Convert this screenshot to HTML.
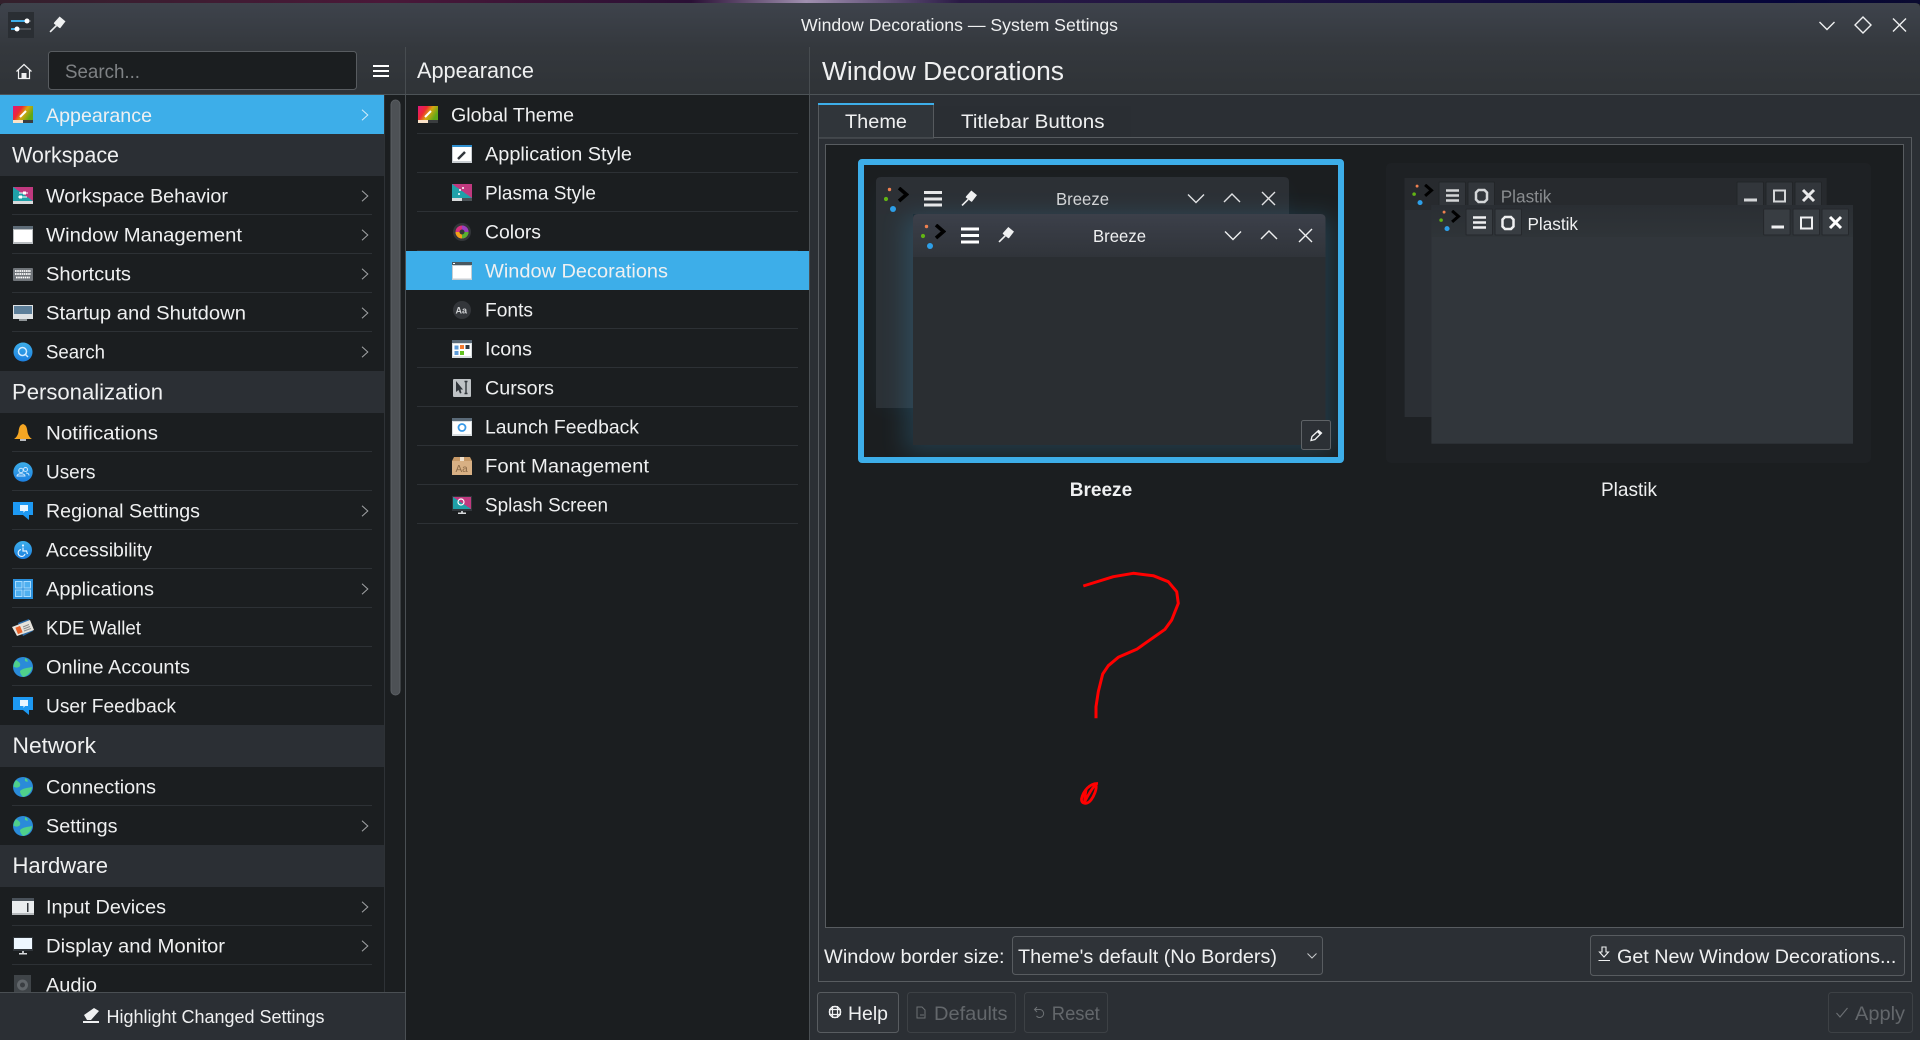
<!DOCTYPE html>
<html lang="en"><head><meta charset="utf-8"><title>Window Decorations — System Settings</title>
<style>
html,body{margin:0;padding:0;background:#1b1e20;width:1920px;height:1040px;overflow:hidden}
svg{display:block}
text{font-family:"Liberation Sans",sans-serif;fill:#eff0f1}
.t{font-size:19.5px}
.h{font-size:22px}
.d{fill:#63676b;font-size:19.5px}
.s{fill:#2d3135}
</style></head><body>
<svg width="1920" height="1040" viewBox="0 0 1920 1040" xmlns="http://www.w3.org/2000/svg">
<defs>
<linearGradient id="top" x1="0" x2="1" y1="0" y2="0"><stop offset="0" stop-color="#33202c"/><stop offset=".2" stop-color="#4a1838"/><stop offset=".36" stop-color="#2a1035"/><stop offset=".42" stop-color="#a090b0"/><stop offset=".5" stop-color="#2a1a45"/><stop offset=".93" stop-color="#05053a"/><stop offset="1" stop-color="#0a0a30"/></linearGradient>
<linearGradient id="hd" x1="0" x2="0" y1="0" y2="1"><stop offset="0" stop-color="#3e434c"/><stop offset=".5" stop-color="#34383d"/><stop offset="1" stop-color="#2f3337"/></linearGradient>
<linearGradient id="ftb" x1="0" x2="0" y1="0" y2="1"><stop offset="0" stop-color="#3c404a"/><stop offset="1" stop-color="#30343a"/></linearGradient>
<linearGradient id="btb" x1="0" x2="0" y1="0" y2="1"><stop offset="0" stop-color="#2c3035"/><stop offset="1" stop-color="#2a3238"/></linearGradient>
<linearGradient id="ptb" x1="0" x2="0" y1="0" y2="1"><stop offset="0" stop-color="#2a2e33"/><stop offset="1" stop-color="#2f3438"/></linearGradient>
<linearGradient id="rb" x1="0" x2="1" y1="0" y2=".45"><stop offset="0" stop-color="#e0157f"/><stop offset=".4" stop-color="#ee2a30"/><stop offset=".65" stop-color="#d8a810"/><stop offset="1" stop-color="#60a818"/></linearGradient>
<linearGradient id="tp" x1="0" x2="1" y1="1" y2="0"><stop offset=".5" stop-color="#1fa0a8"/><stop offset=".5" stop-color="#c0397f"/></linearGradient>
<linearGradient id="bl" x1="0" x2="0" y1="0" y2="1"><stop offset="0" stop-color="#3daee9"/><stop offset="1" stop-color="#1c7fe0"/></linearGradient>
<filter id="gl" x="-20%" y="-20%" width="140%" height="140%"><feGaussianBlur stdDeviation="12"/></filter>
<clipPath id="cb"><rect x="864" y="165" width="474" height="292"/></clipPath>

<symbol id="chev" viewBox="0 0 8 12"><path d="M1 .7 6.8 6 1 11.3" fill="none" stroke="#a3a5a7" stroke-width="1"/></symbol>
<symbol id="chevw" viewBox="0 0 8 12"><path d="M1 .7 6.8 6 1 11.3" fill="none" stroke="#d5eefb" stroke-width="1"/></symbol>
<symbol id="appear" viewBox="0 0 20 20"><rect y="1" width="20" height="14" fill="url(#rb)"/><rect y="15" width="10" height="3" fill="#fce3c8"/><rect x="10" y="15" width="10" height="3" fill="#3a3d3f"/><path d="M7 12 13 6" stroke="#fff" stroke-width="2"/></symbol>
<symbol id="wb" viewBox="0 0 20 20"><rect y="1" width="20" height="14" fill="url(#tp)"/><rect y="15" width="20" height="3" fill="#d8dadb"/><path d="M6 7H15M5 11H14" stroke="#fff" stroke-width="1"/><rect x="10" y="5.5" width="3" height="3" fill="#fff"/><rect x="6" y="9.5" width="3" height="3" fill="#fff"/></symbol>
<symbol id="win" viewBox="0 0 20 20"><rect y="1" width="20" height="18" fill="#b9bdc0"/><rect y="1" width="20" height="3" fill="#5d6b77"/><rect x="1" y="5" width="18" height="12" fill="#fff"/></symbol>
<symbol id="kbd" viewBox="0 0 20 20"><rect y="4" width="20" height="13" rx="1" fill="#70757a"/><path d="M2 7H18M2 10H18M3 13.5H17" stroke="#fff" stroke-width="1.8" stroke-dasharray="1.6 .6"/></symbol>
<symbol id="start" viewBox="0 0 20 20"><rect y="2" width="20" height="14" fill="#dfe2e4"/><rect x="1" y="3" width="18" height="8" fill="#5d7f9a"/><rect x="6" y="16" width="8" height="2" fill="#8f9497"/></symbol>
<symbol id="srch" viewBox="0 0 20 20"><circle cx="10" cy="10" r="9.5" fill="url(#bl)"/><circle cx="9.5" cy="9.5" r="4" fill="none" stroke="#d5ecff" stroke-width="1.5"/><path d="M12.5 12.5 15 15" stroke="#d5ecff" stroke-width="1.5"/></symbol>
<symbol id="bell" viewBox="0 0 20 20"><path d="M10 1C6.5 2 6 5 5.5 9 5 12 3 15 1 16H19C17 15 15 12 14.5 9 14 5 13.5 2 10 1Z" fill="#f5a623"/><rect x="7" y="16" width="6" height="2" fill="#b9bcc0"/></symbol>
<symbol id="users" viewBox="0 0 20 20"><circle cx="10" cy="10" r="9.7" fill="url(#bl)"/><circle cx="8" cy="8.5" r="2.2" fill="none" stroke="#cfe8ff"/><circle cx="12.5" cy="7.500" r="2" fill="none" stroke="#cfe8ff"/><path d="M4 14C4 11 12 11 12 14H4ZM13 11C15 11 16 12 16 13.5" fill="none" stroke="#cfe8ff"/></symbol>
<symbol id="msg" viewBox="0 0 20 20"><rect y="1" width="20" height="13" fill="#1d99f3"/><path d="M10 14H16V19Z" fill="#1d99f3"/><path d="M7 4H15V10H12L10.5 12V10H7Z" fill="#e8f5ff"/></symbol>
<symbol id="acc" viewBox="0 0 20 20"><circle cx="10" cy="10" r="9" fill="url(#bl)"/><circle cx="10" cy="5.5" r="1.100" fill="#e6f4ff"/><path d="M10 7.5V11H13.5L14.5 14M8 9.5A3.5 3.5 0 1 0 12 14" fill="none" stroke="#e6f4ff" stroke-width="1.2"/></symbol>
<symbol id="apps" viewBox="0 0 20 20"><rect width="20" height="20" y="0" fill="#2a8fdb"/><g fill="#4fb0f0" stroke="#a8dcff"><rect x="2.5" y="2.5" width="6.5" height="6.5"/><rect x="11" y="2.5" width="6.5" height="6.5"/><rect x="2.5" y="11" width="6.5" height="6.5"/><rect x="11" y="11" width="6.5" height="6.5"/></g></symbol>
<symbol id="wal" viewBox="0 0 22 22"><path d="M6 6 17 2 21 14 11 19Z" fill="#2c6ca8"/><path d="M0 10 18 3 22 13 5 19Z" fill="#e6e3dc"/><rect x="4.500" y="9.500" width="5" height="7" fill="#e8622a" transform="rotate(-22 7 13)"/><path d="M11 10 17 7.500M11.500 12 18 9.500M12 14 19 11.500" stroke="#8a8d90"/></symbol>
<symbol id="globe" viewBox="0 0 20 20"><circle cx="10" cy="10" r="10" fill="#2a8bd9"/><path d="M3 3C6 5 8 6 7 9 6 11 2 11 .5 9.5.5 7 1.5 5 3 3ZM7 14C10 11 15 11 19 10 19 14 15 19 10 20 8 18 7 16 7 14Z" fill="#4fd08a"/><path d="M12 1C14 2 15 3 14.5 5L12 4Z" fill="#4fd08a"/></symbol>
<symbol id="inp" viewBox="0 0 22 20"><rect y="2" width="22" height="17" fill="#e9ecee"/><rect y="2" width="22" height="3" fill="#4a525a"/><rect y="17" width="22" height="2" fill="#b5b9bc"/><rect x="15" y="7" width="1.5" height="9" fill="#31363b"/></symbol>
<symbol id="mon" viewBox="0 0 20 20"><rect y="1" width="20" height="14" fill="#31363b"/><rect x="1" y="2" width="18" height="11" fill="#eef7ff"/><rect x="9" y="15" width="2" height="3" fill="#b9bdc0"/><rect x="6" y="17" width="8" height="1.5" fill="#d8dadc"/></symbol>
<symbol id="aud" viewBox="0 0 20 20"><rect x="1" width="17" height="20" fill="#3f4448"/><circle cx="9.5" cy="10" r="5.5" fill="#61666a"/><circle cx="9.5" cy="10" r="2.5" fill="#3a3e42"/></symbol>
<symbol id="astyle" viewBox="0 0 20 20"><rect y="1" width="20" height="18" fill="#c9ced2"/><rect y="1" width="20" height="2" fill="#2f8fd0"/><rect x="1" y="3" width="18" height="14" fill="#fff"/><path d="M6 15 13 8" stroke="#31363b" stroke-width="2.500"/></symbol>
<symbol id="pstyle" viewBox="0 0 20 20"><rect y="1" width="20" height="14" fill="url(#tp)"/><rect y="15" width="20" height="3" fill="#4a5156"/><rect y="15" width="10" height="3" fill="#d8dadb"/><path d="M7 7H9M10 5H12M6 11H8" stroke="#fff" stroke-width="1.5"/></symbol>
<symbol id="colr" viewBox="0 0 20 20"><circle cx="10" cy="10" r="9" fill="#33363a"/><circle cx="10" cy="10" r="6.5" fill="#d8307f"/><path d="M16.5 10A6.5 6.5 0 0 0 10 3.500V10Z" fill="#9a40c0"/><path d="M10 16.5A6.5 6.5 0 0 1 3.500 10H10Z" fill="#f0a018"/><path d="M16.5 10A6.5 6.5 0 0 1 10 16.5V10Z" fill="#58b030"/><circle cx="10" cy="10" r="2.500" fill="#33363a"/></symbol>
<symbol id="wdec" viewBox="0 0 20 20"><rect y="1" width="20" height="18" fill="#c7ced3"/><rect y="1" width="20" height="3" fill="#4a5860"/><rect x="1" y="5" width="18" height="12.5" fill="#fff"/><rect x="1" y="2" width="2" height="1" fill="#fff"/></symbol>
<symbol id="fnt" viewBox="0 0 20 20"><circle cx="10" cy="10" r="9" fill="#33363a"/><text x="3.5" y="13.5" style="font-size:9px;font-weight:700;fill:#d0d2d4">Aa</text></symbol>
<symbol id="icn" viewBox="0 0 20 20"><rect y="1" width="20" height="18" fill="#d8dde0"/><rect y="1" width="20" height="3" fill="#5a6a78"/><rect x="1" y="5" width="18" height="12" fill="#fff"/><rect x="2.5" y="6.5" width="4" height="4" fill="#5c9bd8"/><rect x="8" y="6" width="4" height="4" fill="#f47a30"/><rect x="13.5" y="6" width="4" height="4" fill="#2d3a45"/><rect x="2.5" y="12" width="4" height="4" fill="#5c9bd8"/><rect x="8" y="12" width="4" height="4" fill="#62c020"/></symbol>
<symbol id="cur" viewBox="0 0 20 20"><rect x="1" y="1" width="18" height="18" rx="1" fill="#bfc3c6"/><path d="M4 3V14L6.500 12 8 15.5 9.5 15 8.500 11.5 11 11.5Z" fill="#31363b"/><path d="M14 4V15M12.5 3.5H15.500M12.5 15.5H15.5" stroke="#31363b" stroke-width="1.4"/></symbol>
<symbol id="lf" viewBox="0 0 20 20"><rect y="1" width="20" height="18" fill="#d8dde0"/><rect y="1" width="20" height="3" fill="#5a6a78"/><rect x="1" y="5" width="18" height="12" fill="#fff"/><circle cx="10" cy="10.5" r="3.5" fill="none" stroke="#3a9ae8" stroke-width="1.8"/></symbol>
<symbol id="fm" viewBox="0 0 20 20"><path d="M2 1H18L20 5V19H0V5Z" fill="#c89a68"/><rect y="5" width="20" height="14" fill="#d8b084"/><rect x="8" y="1" width="4" height="4" fill="#efe0cc"/><text x="3.5" y="16" style="font-size:10px;fill:#8a6a48">Aa</text></symbol>
<symbol id="spl" viewBox="0 0 20 20"><rect y="1" width="20" height="15" fill="#31363b"/><rect x="1" y="2" width="18" height="12" fill="url(#tp)"/><circle cx="9" cy="7" r="3" fill="none" stroke="#fff" stroke-width="1.2"/><rect x="9" y="16" width="2" height="2" fill="#b9bdc0"/><rect x="6" y="17.5" width="8" height="1.5" fill="#d8dadc"/></symbol>

<symbol id="pin" viewBox="0 0 16 16"><path d="M10 .5 15.500 5 10.500 11.5 9.500 11 4.500 7 5 6Z" fill="#eff0f1"/><path d="M7 9 1 15" stroke="#eff0f1" stroke-width="1.6"/></symbol>
<symbol id="logo" viewBox="0 0 25 26"><circle cx="5.5" cy="2.5" r="1.7" fill="#f08050"/><circle cx="2" cy="12" r="2.1" fill="#62b414"/><circle cx="9" cy="22" r="3" fill="#2d9fe8"/><path d="M15 1 22.500 7.5 15 14" fill="none" stroke="#000" stroke-width="3.6"/></symbol>
</defs>

<rect width="1920" height="4" fill="url(#top)"/>
<path d="M0 8Q0 3 5 3H1915Q1920 3 1920 8V1040H0Z" fill="#2b2f34"/>
<path d="M0 94V8Q0 3 5 3H1915Q1920 3 1920 8V94Z" fill="url(#hd)"/>

<!-- titlebar -->
<rect x="8" y="12" width="26" height="26" fill="#2a2e33"/><path d="M11 21H31M11 29H31" stroke="#4d5156" stroke-width="2"/><path d="M11 21H27M11 29H17" stroke="#3daee9" stroke-width="2"/><circle cx="27" cy="21" r="2.5" fill="#fff"/><circle cx="17" cy="29" r="2.5" fill="#fff"/>
<use href="#pin" x="49" y="16" width="17" height="17"/>
<text x="801" y="31" style="font-size:17.5px" textLength="317" lengthAdjust="spacingAndGlyphs">Window Decorations — System Settings</text>
<path d="M1819.5 22 1827 29.5 1834.5 22" fill="none" stroke="#eff0f1" stroke-width="1.4"/>
<path d="M1863 17 1871 25 1863 33 1855 25Z" fill="none" stroke="#eff0f1" stroke-width="1.4"/>
<path d="M1893 18.5 1906 31.5M1906 18.5 1893 31.5" stroke="#eff0f1" stroke-width="1.4"/>

<!-- toolbar -->
<path d="M16.5 71.5 24 64.500 31.500 71.5M18.500 70V78.5H29.500V70" fill="none" stroke="#eff0f1" stroke-width="1.2"/><rect x="21.5" y="73" width="5" height="6" fill="#eff0f1"/>
<rect x="48.5" y="51.5" width="308" height="38" rx="3" fill="#1b1e20" stroke="#585c60"/>
<text x="65" y="78" class="t" style="fill:#7f8285" textLength="75" lengthAdjust="spacingAndGlyphs">Search...</text>
<path d="M373 66H389M373 71H389M373 76H389" stroke="#fff" stroke-width="2"/>
<path d="M405.5 47V94M809.5 47V94" stroke="#474c50"/>
<text x="417" y="78" class="h" textLength="117" lengthAdjust="spacingAndGlyphs">Appearance</text>
<text x="822" y="80" style="font-size:25.5px" textLength="242" lengthAdjust="spacingAndGlyphs">Window Decorations</text>
<rect y="94" width="1920" height="1" fill="#4d5357"/>

<!-- left list -->
<rect y="95" width="405" height="945" fill="#1b1e20"/>
<rect x="384" y="95" width="1" height="897" fill="#2e3236"/>
<rect x="405" y="95" width="1" height="945" fill="#4a4f53"/>
<rect x="391" y="100" width="9" height="595" rx="4.5" fill="#4d5155" stroke="#5a5e62"/>
<rect y="95" width="384" height="39" fill="#3daee9"/>
<rect y="134" width="384" height="42" fill="#2b2f34"/>
<rect y="371" width="384" height="42" fill="#2b2f34"/>
<rect y="725" width="384" height="42" fill="#2b2f34"/>
<rect y="845" width="384" height="42" fill="#2b2f34"/>
<g class="s">
<rect x="12" y="214" width="360" height="1"/><rect x="12" y="253" width="360" height="1"/><rect x="12" y="292" width="360" height="1"/><rect x="12" y="331" width="360" height="1"/>
<rect x="12" y="451" width="360" height="1"/><rect x="12" y="490" width="360" height="1"/><rect x="12" y="529" width="360" height="1"/><rect x="12" y="568" width="360" height="1"/><rect x="12" y="607" width="360" height="1"/><rect x="12" y="646" width="360" height="1"/><rect x="12" y="685" width="360" height="1"/>
<rect x="12" y="805" width="360" height="1"/>
<rect x="12" y="925" width="360" height="1"/><rect x="12" y="964" width="360" height="1"/>
</g>
<use href="#appear" x="13" y="105" width="20" height="20"/>
<use href="#wb" x="13" y="186" width="20" height="20"/>
<use href="#win" x="13" y="225" width="20" height="20"/>
<use href="#kbd" x="13" y="264" width="20" height="20"/>
<use href="#start" x="13" y="303" width="20" height="20"/>
<use href="#srch" x="13" y="342" width="20" height="20"/>
<use href="#bell" x="13" y="423" width="20" height="20"/>
<use href="#users" x="13" y="462" width="20" height="20"/>
<use href="#msg" x="13" y="501" width="20" height="20"/>
<use href="#acc" x="13" y="540" width="20" height="20"/>
<use href="#apps" x="13" y="579" width="20" height="20"/>
<use href="#wal" x="12" y="617" width="22" height="22"/>
<use href="#globe" x="13" y="657" width="20" height="20"/>
<use href="#msg" x="13" y="696" width="20" height="20"/>
<use href="#globe" x="13" y="777" width="20" height="20"/>
<use href="#globe" x="13" y="816" width="20" height="20"/>
<use href="#inp" x="12" y="896" width="22" height="20"/>
<use href="#mon" x="13" y="936" width="20" height="20"/>
<use href="#aud" x="13" y="975" width="20" height="20"/>
<text x="46" y="122" class="t" textLength="106" lengthAdjust="spacingAndGlyphs">Appearance</text>
<text x="46" y="202.5" class="t" textLength="182" lengthAdjust="spacingAndGlyphs">Workspace Behavior</text>
<text x="46" y="241.5" class="t" textLength="196" lengthAdjust="spacingAndGlyphs">Window Management</text>
<text x="46" y="280.5" class="t" textLength="85" lengthAdjust="spacingAndGlyphs">Shortcuts</text>
<text x="46" y="319.5" class="t" textLength="200" lengthAdjust="spacingAndGlyphs">Startup and Shutdown</text>
<text x="46" y="358.5" class="t" textLength="59" lengthAdjust="spacingAndGlyphs">Search</text>
<text x="46" y="439.5" class="t" textLength="112" lengthAdjust="spacingAndGlyphs">Notifications</text>
<text x="46" y="478.5" class="t" textLength="49.5" lengthAdjust="spacingAndGlyphs">Users</text>
<text x="46" y="517.5" class="t" textLength="154" lengthAdjust="spacingAndGlyphs">Regional Settings</text>
<text x="46" y="556.5" class="t" textLength="106" lengthAdjust="spacingAndGlyphs">Accessibility</text>
<text x="46" y="595.5" class="t" textLength="108" lengthAdjust="spacingAndGlyphs">Applications</text>
<text x="46" y="634.5" class="t" textLength="95" lengthAdjust="spacingAndGlyphs">KDE Wallet</text>
<text x="46" y="673.5" class="t" textLength="144" lengthAdjust="spacingAndGlyphs">Online Accounts</text>
<text x="46" y="712.5" class="t" textLength="130" lengthAdjust="spacingAndGlyphs">User Feedback</text>
<text x="46" y="793.5" class="t" textLength="110" lengthAdjust="spacingAndGlyphs">Connections</text>
<text x="46" y="832.5" class="t" textLength="71.5" lengthAdjust="spacingAndGlyphs">Settings</text>
<text x="46" y="913.5" class="t" textLength="120" lengthAdjust="spacingAndGlyphs">Input Devices</text>
<text x="46" y="952.5" class="t" textLength="179" lengthAdjust="spacingAndGlyphs">Display and Monitor</text>
<text x="46" y="991.5" class="t" textLength="51" lengthAdjust="spacingAndGlyphs">Audio</text>
<text x="12" y="162.5" class="h" textLength="107" lengthAdjust="spacingAndGlyphs">Workspace</text>
<text x="12" y="399.5" class="h" textLength="151" lengthAdjust="spacingAndGlyphs">Personalization</text>
<text x="12.5" y="753" class="h" textLength="83.5" lengthAdjust="spacingAndGlyphs">Network</text>
<text x="12.5" y="873" class="h" textLength="95.5" lengthAdjust="spacingAndGlyphs">Hardware</text>
<use href="#chevw" x="361" y="109" width="8" height="12"/>
<use href="#chev" x="361" y="190" width="8" height="12"/>
<use href="#chev" x="361" y="229" width="8" height="12"/>
<use href="#chev" x="361" y="268" width="8" height="12"/>
<use href="#chev" x="361" y="307" width="8" height="12"/>
<use href="#chev" x="361" y="346" width="8" height="12"/>
<use href="#chev" x="361" y="505" width="8" height="12"/>
<use href="#chev" x="361" y="583" width="8" height="12"/>
<use href="#chev" x="361" y="820" width="8" height="12"/>
<use href="#chev" x="361" y="901" width="8" height="12"/>
<use href="#chev" x="361" y="940" width="8" height="12"/>

<!-- footer -->
<rect y="992" width="405" height="48" fill="#2b2f34"/><rect y="992" width="405" height="1" fill="#4a4f53"/>
<path d="M87 1020 84 1015 94 1008 99 1011 91 1020ZM83 1021H99V1023H83Z" fill="#eff0f1"/>
<text x="106.5" y="1023" style="font-size:18.5px" textLength="218" lengthAdjust="spacingAndGlyphs">Highlight Changed Settings</text>

<!-- middle pane -->
<rect x="406" y="95" width="403" height="945" fill="#1b1e20"/>
<rect x="809" y="95" width="1" height="945" fill="#4a4f53"/>
<g class="s">
<rect x="417" y="133" width="381" height="1"/><rect x="417" y="172" width="381" height="1"/><rect x="417" y="211" width="381" height="1"/><rect x="417" y="250" width="381" height="1"/>
<rect x="417" y="328" width="381" height="1"/><rect x="417" y="367" width="381" height="1"/><rect x="417" y="406" width="381" height="1"/><rect x="417" y="445" width="381" height="1"/><rect x="417" y="484" width="381" height="1"/><rect x="417" y="523" width="381" height="1"/>
</g>
<rect x="406" y="251" width="403" height="39" fill="#3daee9"/>
<use href="#appear" x="418" y="105" width="20" height="20"/>
<use href="#astyle" x="452" y="144" width="20" height="20"/>
<use href="#pstyle" x="452" y="183" width="20" height="20"/>
<use href="#colr" x="452" y="222" width="20" height="20"/>
<use href="#wdec" x="452" y="261" width="20" height="20"/>
<use href="#fnt" x="452" y="300" width="20" height="20"/>
<use href="#icn" x="452" y="339" width="20" height="20"/>
<use href="#cur" x="452" y="378" width="20" height="20"/>
<use href="#lf" x="452" y="417" width="20" height="20"/>
<use href="#fm" x="452" y="456" width="20" height="20"/>
<use href="#spl" x="452" y="495" width="20" height="20"/>
<text x="451" y="121.7" class="t" textLength="123" lengthAdjust="spacingAndGlyphs">Global Theme</text>
<text x="485" y="160.7" class="t" textLength="147" lengthAdjust="spacingAndGlyphs">Application Style</text>
<text x="485" y="199.7" class="t" textLength="111" lengthAdjust="spacingAndGlyphs">Plasma Style</text>
<text x="485" y="238.7" class="t" textLength="56" lengthAdjust="spacingAndGlyphs">Colors</text>
<text x="485" y="277.7" class="t" textLength="183" lengthAdjust="spacingAndGlyphs">Window Decorations</text>
<text x="485" y="316.7" class="t" textLength="48" lengthAdjust="spacingAndGlyphs">Fonts</text>
<text x="485" y="355.7" class="t" textLength="47" lengthAdjust="spacingAndGlyphs">Icons</text>
<text x="485" y="394.7" class="t" textLength="69" lengthAdjust="spacingAndGlyphs">Cursors</text>
<text x="485" y="433.7" class="t" textLength="154" lengthAdjust="spacingAndGlyphs">Launch Feedback</text>
<text x="485" y="472.7" class="t" textLength="164" lengthAdjust="spacingAndGlyphs">Font Management</text>
<text x="485" y="511.7" class="t" textLength="123" lengthAdjust="spacingAndGlyphs">Splash Screen</text>

<!-- tabs -->
<rect x="933" y="106" width="198" height="31" fill="#2a2e33"/>
<rect x="818.5" y="104" width="115" height="34" fill="#30353a" stroke="#565a5e"/>
<rect x="818" y="103" width="116" height="2" fill="#3daee9"/>
<text x="845" y="128" class="t" textLength="62" lengthAdjust="spacingAndGlyphs">Theme</text>
<text x="961" y="128" class="t" textLength="143.5" lengthAdjust="spacingAndGlyphs">Titlebar Buttons</text>
<path d="M933.5 137.5H1911.5V981.5H818.5V137.5H819" fill="none" stroke="#585c60"/>
<rect x="825.5" y="144.5" width="1078" height="783" fill="#1b1e20" stroke="#585c60"/>

<!-- Breeze preview -->
<rect x="861" y="162" width="480" height="298" rx="1" fill="#1b1e20" stroke="#3daee9" stroke-width="6"/>
<g clip-path="url(#cb)">
<rect x="880" y="190" width="405" height="215" fill="#3daee9" opacity=".07" filter="url(#gl)"/>
<path d="M876 408V182Q876 177 881 177H1284Q1289 177 1289 182V214H913V408Z" fill="url(#btb)"/>
<rect x="876" y="214" width="37" height="194" fill="#2b3136"/>
<rect x="905" y="216" width="428" height="237" fill="#3daee9" opacity=".2" filter="url(#gl)"/>
<path d="M913 445V219Q913 214 918 214H1320.5Q1325.5 214 1325.5 219V445Z" fill="#2a2e32"/>
<path d="M913 257V219Q913 214 918 214H1320.5Q1325.5 214 1325.5 219V257Z" fill="url(#ftb)"/>
</g>
<!-- back deco -->
<use href="#logo" x="884" y="187" width="25" height="26"/>
<path d="M924 192.5H942M924 199H942M924 205H942" stroke="#e6e7e8" stroke-width="3"/>
<use href="#pin" x="961" y="190" width="16.5" height="16.5"/>
<text x="1056" y="205" style="font-size:17.5px;fill:#d2d4d6" textLength="53" lengthAdjust="spacingAndGlyphs">Breeze</text>
<path d="M1188 194.5 1196 202.5 1204 194.5M1224 202 1232 194 1240 202M1262 192 1275 205M1275 192 1262 205" fill="none" stroke="#e0e1e3" stroke-width="1.4"/>
<!-- front deco -->
<use href="#logo" x="921" y="224" width="25" height="26"/>
<path d="M961 229H979M961 235.5H979M961 242H979" stroke="#fff" stroke-width="3"/>
<use href="#pin" x="998" y="226.5" width="16.5" height="16.5"/>
<text x="1093" y="242" style="font-size:17.5px" textLength="53" lengthAdjust="spacingAndGlyphs">Breeze</text>
<path d="M1225 231.5 1233 239.5 1241 231.5M1261 239 1269 231 1277 239M1299 229 1312 242M1312 229 1299 242" fill="none" stroke="#eff0f1" stroke-width="1.4"/>
<!-- edit -->
<rect x="1301.5" y="420.5" width="29" height="29" rx="2" fill="#2c3035" stroke="#5f6367"/>
<path d="M1311 440.5 1312 436.5 1318.5 430.5 1321.5 433 1315 439.5Z" fill="none" stroke="#eff0f1" stroke-width="1.3"/><path d="M1317 432 1318.5 430.5 1321.5 433 1320 435Z" fill="#eff0f1"/>
<text x="1069.7" y="496" style="font-size:19.5px;font-weight:700" textLength="62.5" lengthAdjust="spacingAndGlyphs">Breeze</text>

<!-- Plastik preview -->
<rect x="1386" y="163" width="485" height="300" rx="5" fill="#1e2124"/>
<rect x="1404.6" y="178" width="422" height="239" fill="#2b2f34"/>
<rect x="1404.6" y="178" width="422" height="32" fill="#272a2e"/>
<g fill="#32363b" stroke="#222528">
<rect x="1439" y="182" width="26.5" height="26" rx="1"/><rect x="1468" y="182" width="26.5" height="26" rx="1"/><rect x="1737" y="182" width="26.5" height="26" rx="1"/><rect x="1766" y="182" width="26.5" height="26" rx="1"/><rect x="1795" y="182" width="26.5" height="26" rx="1"/>
</g>
<use href="#logo" x="1412" y="184" width="22" height="22"/>
<path d="M1446 190.5H1459M1446 195.5H1459M1446 200.5H1459" stroke="#d4d6d8" stroke-width="2.5"/>
<path d="M1478.5 190H1484.5L1487 192.5V199.5L1484.5 202H1478.5L1476 199.5V192.5Z" fill="none" stroke="#d4d6d8" stroke-width="2.5"/>
<path d="M1744 200H1757" stroke="#d4d6d8" stroke-width="3"/>
<rect x="1774" y="190.5" width="11" height="11" fill="none" stroke="#d4d6d8" stroke-width="2"/>
<path d="M1803 190 1814 201M1814 190 1803 201" stroke="#e8e9ea" stroke-width="3"/>
<text x="1500.7" y="202.7" style="font-size:17.5px;fill:#8a8d90" textLength="50.7" lengthAdjust="spacingAndGlyphs">Plastik</text>
<rect x="1431.4" y="205" width="421.6" height="238.7" fill="#31363b"/>
<rect x="1431.4" y="205" width="421.6" height="32" fill="url(#ptb)"/>
<g fill="#383d42" stroke="#25282c">
<rect x="1466" y="209" width="26.5" height="26" rx="1"/><rect x="1495" y="209" width="26.5" height="26" rx="1"/><rect x="1763.6" y="209" width="26.5" height="26" rx="1"/><rect x="1793" y="209" width="26.5" height="26" rx="1"/><rect x="1822" y="209" width="26.5" height="26" rx="1"/>
</g>
<use href="#logo" x="1439" y="210" width="22" height="22"/>
<path d="M1473 217.5H1486M1473 222.5H1486M1473 227.5H1486" stroke="#eff0f1" stroke-width="2.5"/>
<path d="M1505 217H1511L1513.5 219.5V226.5L1511 229H1505L1502.5 226.5V219.5Z" fill="none" stroke="#eff0f1" stroke-width="2.5"/>
<path d="M1771.5 227H1784" stroke="#eff0f1" stroke-width="3"/>
<rect x="1801" y="217.5" width="11" height="11" fill="none" stroke="#eff0f1" stroke-width="2"/>
<path d="M1830 217 1841 228M1841 217 1830 228" stroke="#fff" stroke-width="3"/>
<text x="1527.5" y="230" style="font-size:17.5px" textLength="50.5" lengthAdjust="spacingAndGlyphs">Plastik</text>
<text x="1601" y="496" class="t" textLength="56" lengthAdjust="spacingAndGlyphs">Plastik</text>

<!-- scribble -->
<path d="M1083.3 586 1113.3 576.7 1133.3 573.3 1153.3 575.7 1168.3 581.7 1176.7 591.7 1178.3 603.3 1171.7 620 1165 629.3 1136.7 649.3 1118.300 657.3 1108.3 665.7 1102.7 674 1098.3 691.7 1096 706.7 1096 718.3" fill="none" stroke="#ff0000" stroke-width="3" stroke-linejoin="round"/>
<path d="M1098 783.5C1090 783 1083 791 1081.5 799 1081 804 1087 805 1091 800 1094 796 1097 789 1096 785 1094 785 1088 795 1084 803M1086 790C1085 796 1084 800 1085 803" fill="none" stroke="#ff0000" stroke-width="2.8"/>

<!-- bottom of panel -->
<text x="824" y="963" class="t" textLength="180.6" lengthAdjust="spacingAndGlyphs">Window border size:</text>
<rect x="1012.5" y="936.5" width="310" height="38" rx="3" fill="#2f3338" stroke="#585c60"/>
<text x="1018" y="963" class="t" textLength="259" lengthAdjust="spacingAndGlyphs">Theme's default (No Borders)</text>
<path d="M1307.5 953.5 1312 958 1316.5 953.5" fill="none" stroke="#c8cacc"/>
<rect x="1590.5" y="935.5" width="314" height="40" rx="3" fill="#2f3338" stroke="#585c60"/>
<path d="M1602 947H1606V952H1608.5L1604 957 1599.5 952H1602ZM1598.5 960.5H1610" fill="none" stroke="#eff0f1" stroke-width="1.1"/>
<text x="1617" y="963" class="t" textLength="279.4" lengthAdjust="spacingAndGlyphs">Get New Window Decorations...</text>

<rect x="817.5" y="992.500" width="81" height="40" rx="3" fill="#2f3338" stroke="#585c60"/>
<circle cx="835" cy="1012" r="5.5" fill="none" stroke="#eff0f1" stroke-width="1.5"/><path d="M829 1009.5H841M829 1014.5H841M832.5 1006V1018M837.5 1006V1018" stroke="#eff0f1" stroke-width="1.2"/>
<text x="848" y="1020" class="t" textLength="40" lengthAdjust="spacingAndGlyphs">Help</text>
<rect x="907.5" y="992.5" width="108" height="40" rx="3" fill="none" stroke="#3d4145"/>
<path d="M917 1007H922L925 1010V1018H917Z" fill="none" stroke="#6c7074"/><path d="M920 1015H924" stroke="#6c7074"/>
<text x="934" y="1020" class="d" textLength="73.5" lengthAdjust="spacingAndGlyphs">Defaults</text>
<rect x="1024.5" y="992.5" width="83" height="40" rx="3" fill="none" stroke="#3d4145"/>
<path d="M1035 1009.5H1040A4 4 0 1 1 1036.5 1016M1037 1007 1034.5 1009.5 1037 1012" fill="none" stroke="#6c7074"/>
<text x="1051.8" y="1020" class="d" textLength="48" lengthAdjust="spacingAndGlyphs">Reset</text>
<rect x="1828.5" y="992.5" width="84" height="40" rx="3" fill="none" stroke="#3d4145"/>
<path d="M1836.5 1013 1840 1017 1847.5 1008" fill="none" stroke="#6c7074" stroke-width="1.1"/>
<text x="1855" y="1020" class="d" textLength="50" lengthAdjust="spacingAndGlyphs">Apply</text>
</svg>
</body></html>
